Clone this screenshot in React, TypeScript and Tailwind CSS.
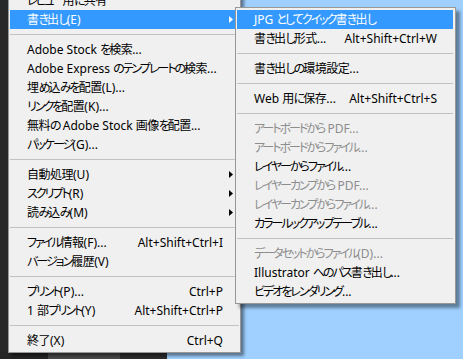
import React from 'react';

type Item =
  | { sep: true }
  | { label: string; shortcut?: string; arrow?: boolean; active?: boolean; disabled?: boolean; sep?: false };

const mainItems: Item[] = [
  { label: 'レビュー用に共有' },
  { label: '書き出し(E)', arrow: true, active: true },
  { sep: true },
  { label: 'Adobe Stock を検索...' },
  { label: 'Adobe Express のテンプレートの検索...' },
  { label: '埋め込みを配置(L)...' },
  { label: 'リンクを配置(K)...' },
  { label: '無料の Adobe Stock 画像を配置...' },
  { label: 'パッケージ(G)...' },
  { sep: true },
  { label: '自動処理(U)', arrow: true },
  { label: 'スクリプト(R)', arrow: true },
  { label: '読み込み(M)', arrow: true },
  { sep: true },
  { label: 'ファイル情報(F)...', shortcut: 'Alt+Shift+Ctrl+I' },
  { label: 'バージョン履歴(V)' },
  { sep: true },
  { label: 'プリント(P)...', shortcut: 'Ctrl+P' },
  { label: '1 部プリント(Y)', shortcut: 'Alt+Shift+Ctrl+P' },
  { sep: true },
  { label: '終了(X)', shortcut: 'Ctrl+Q' },
];

const subItems: Item[] = [
  { label: 'JPG としてクイック書き出し', active: true },
  { label: '書き出し形式...', shortcut: 'Alt+Shift+Ctrl+W' },
  { sep: true },
  { label: '書き出しの環境設定...' },
  { sep: true },
  { label: 'Web 用に保存...', shortcut: 'Alt+Shift+Ctrl+S' },
  { sep: true },
  { label: 'アートボードから PDF...', disabled: true },
  { label: 'アートボードからファイル...', disabled: true },
  { label: 'レイヤーからファイル...' },
  { label: 'レイヤーカンプから PDF...', disabled: true },
  { label: 'レイヤーカンプからファイル...', disabled: true },
  { label: 'カラールックアップテーブル...' },
  { sep: true },
  { label: 'データセットからファイル(D)...', disabled: true },
  { label: 'Illustrator へのパス書き出し...' },
  { label: 'ビデオをレンダリング...' },
];

// kana set tight like Meiryo UI, kanji only a little
function Label({ text }: { text: string }) {
  const parts = text.split(/([\u3040-\u30ff]+|[\u4e00-\u9fff]+)/);
  return (
    <span className="flex-1">
      {parts.map((p, i) => {
        if (i % 2 === 0) return <span key={i}>{p}</span>;
        const kana = /^[\u3040-\u30ff]/.test(p);
        return (
          <span
            key={i}
            className={kana ? "tracking-[-2px] [font-feature-settings:'palt']" : 'tracking-[-0.5px]'}
          >
            {p}
          </span>
        );
      })}
    </span>
  );
}

function Arrow({ white }: { white?: boolean }) {
  return (
    <svg width="4" height="7" viewBox="0 0 4 7" className="absolute right-[6px] top-[6px]">
      <polygon points="0,0 4,3.5 0,7" fill={white ? '#ffffff' : '#000000'} />
    </svg>
  );
}

function MenuList({ items }: { items: Item[] }) {
  return (
    <>
      {items.map((it, i) => {
        if (it.sep) {
          return (
            <div key={i} className="h-[11px] flex items-center">
              <div className="w-full h-px bg-[#c2c2c2]" />
            </div>
          );
        }
        return (
          <div
            key={i}
            className={`relative h-[19px] flex items-center pl-[17px] pr-[16px] whitespace-nowrap leading-[19px] ${
              it.active ? 'bg-[#3399ff] text-white' : it.disabled ? 'text-[#8d8d8d]' : 'text-black'
            }`}
          >
            <Label text={it.label} />
            {it.shortcut && <span>{it.shortcut}</span>}
            {it.arrow && <Arrow white={it.active} />}
          </div>
        );
      })}
    </>
  );
}

export default function App() {
  return (
    <div
      className="relative w-[463px] h-[359px] overflow-hidden bg-[#9fd0ff] flex text-[12px]"
      style={{ fontFamily: '"Noto Sans", "Noto Sans CJK JP", sans-serif' }}
    >
      {/* Photoshop window behind the menus */}
      <div className="w-[167px] h-full bg-[#282828] flex flex-col justify-end">
        <div className="h-[7px] flex">
          <div className="w-[48px] bg-[#262626]" />
          <div className="w-[72px] bg-[#4a4a4a]" />
          <div className="flex-1 bg-[#2d2d2d]" />
        </div>
      </div>

      {/* File menu */}
      <div className="absolute left-[8px] top-[-12px] w-[233px] bg-[#f0f0f0] border border-[#979797] py-[2px] px-px shadow-[3px_3px_3px_rgba(0,0,0,0.45)]">
        <MenuList items={mainItems} />
      </div>

      {/* Export submenu */}
      <div className="absolute left-[235px] top-[7px] w-[221px] bg-[#f0f0f0] border border-[#979797] py-[2px] pl-px pr-[2px] shadow-[4px_4px_3px_rgba(0,0,0,0.4)]">
        <MenuList items={subItems} />
      </div>
    </div>
  );
}
